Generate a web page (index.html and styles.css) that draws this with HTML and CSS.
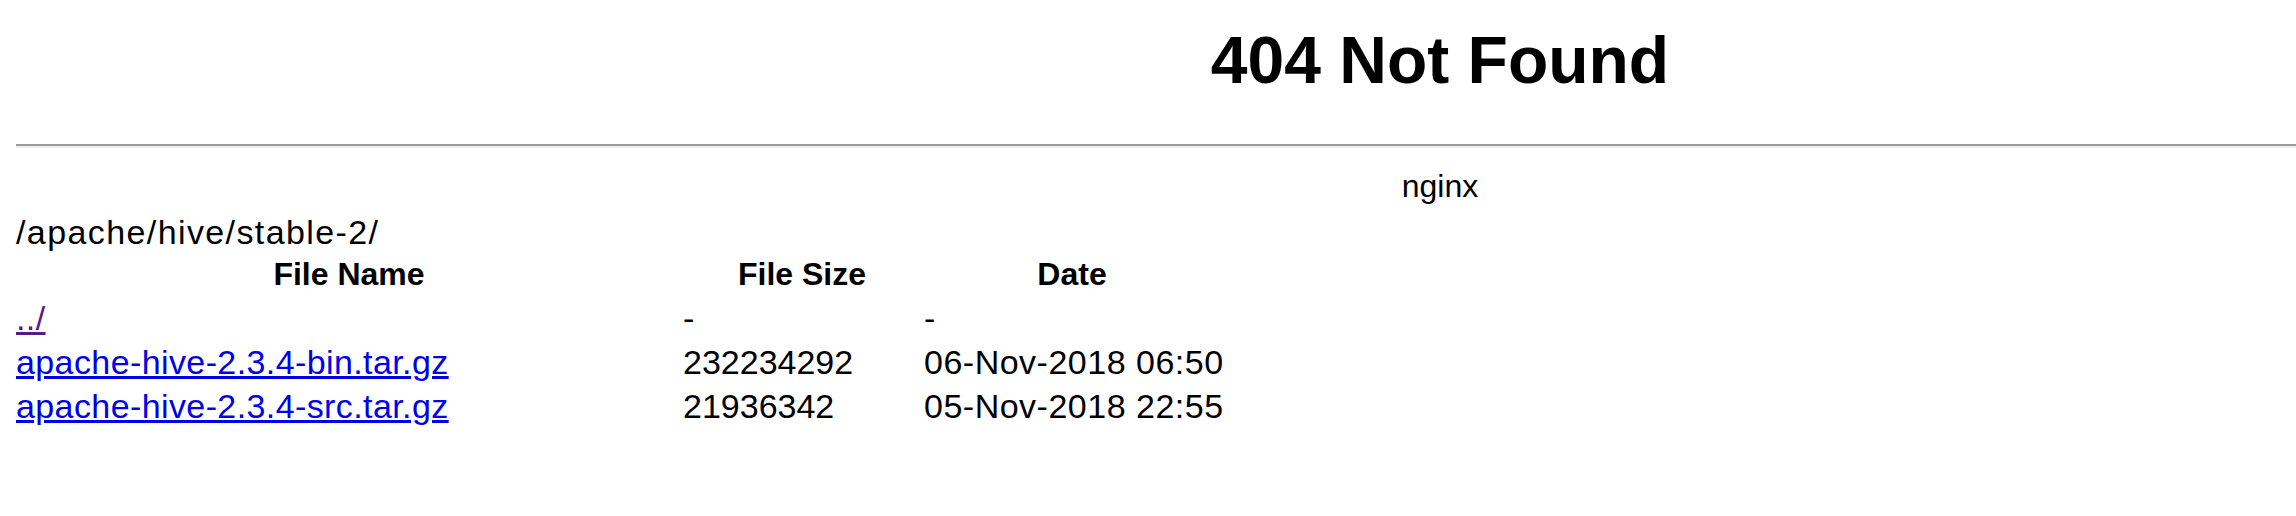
FILE: index.html
```html
<!DOCTYPE html>
<html>
<head>
<meta charset="utf-8">
<title>404 Not Found</title>
<link rel="stylesheet" href="styles.css">
</head>
<body>
<div class="page">
  <div class="center"><h1 class="title">404 Not Found</h1></div>
  <hr class="rule">
  <div class="center server">nginx</div>
  <div class="path">/apache/hive/stable-2/</div>
  <div class="listing">
    <div class="th">File Name</div>
    <div class="th">File Size</div>
    <div class="th">Date</div>

    <div class="td name"><a class="visited" href="#">../</a></div>
    <div class="td size">-</div>
    <div class="td date">-</div>

    <div class="td name"><a href="#">apache-hive-2.3.4-bin.tar.gz</a></div>
    <div class="td size">232234292</div>
    <div class="td date">06-Nov-2018 06:50</div>

    <div class="td name"><a href="#">apache-hive-2.3.4-src.tar.gz</a></div>
    <div class="td size">21936342</div>
    <div class="td date">05-Nov-2018 22:55</div>
  </div>
</div>
</body>
</html>
```

FILE: styles.css
```css
html, body {
  margin: 0;
  padding: 0;
  background: #ffffff;
}

body {
  font-family: "Liberation Sans", Arial, sans-serif;
  color: #000000;
}

.page {
  margin: 0 0 0 16px;
}

.center {
  text-align: center;
  padding-left: 568px;
}

.title {
  margin: 20px 0 0 0;
  font-size: 66px;
  line-height: 80px;
  font-weight: bold;
}

.rule {
  margin: 44px 0 0 0;
  height: 0;
  border: 0;
  border-top: 2px solid #9a9a9a;
  border-bottom: 2px solid #eeeeee;
}

.server {
  margin-top: 18px;
  font-size: 32px;
  line-height: 40px;
}

.path {
  margin-top: 6px;
  font-size: 34px;
  line-height: 40px;
  letter-spacing: 1.4px;
}

.listing {
  display: grid;
  grid-template-columns: 666px 240px 300px;
  width: 1206px;
}

.th {
  font-size: 32px;
  line-height: 44px;
  font-weight: bold;
  text-align: center;
}

.td {
  font-size: 34px;
  line-height: 44px;
  white-space: nowrap;
}

.size {
  padding-left: 1px;
}

.date {
  padding-left: 2px;
  letter-spacing: 0.5px;
}

.td a {
  color: #0000ee;
  text-decoration: underline;
  letter-spacing: 0.4px;
}

.td a.visited {
  color: #551a8b;
}
```
